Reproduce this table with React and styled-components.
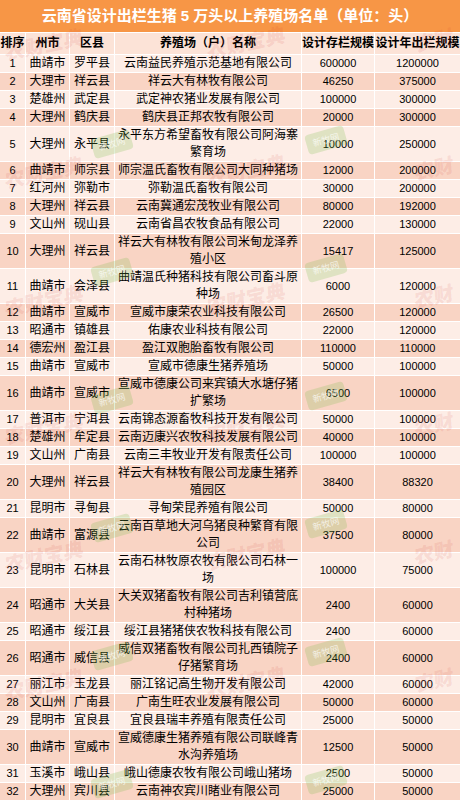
import React from 'react';
import styled, {createGlobalStyle} from 'styled-components';

const GlobalStyle = createGlobalStyle`
  html, body {
    margin: 0;
    padding: 0;
    background: #fff;
  }
  body {
    font-family: "Liberation Sans", "Noto Sans CJK SC", sans-serif;
    color: #000;
  }
`;

const Sheet = styled.div`
  position: relative;
  width: 460px;
  display: flex;
  flex-direction: column;
  gap: 1px;
  background: #fff;
  overflow: hidden;
`;

const Title = styled.div`
  height: 32px;
  background: #f79646;
  color: #fff;
  font-weight: bold;
  font-size: 15px;
  line-height: 32px;
  text-align: center;
  white-space: nowrap;
`;

const Row = styled.div`
  display: grid;
  grid-template-columns: 25px 43px 44px 186px 72px 85px;
  column-gap: 1px;
  & > * {
    background: ${p => p.$head ? '#fce3d7' : p.$even ? '#f9d4c4' : '#fdede6'};
  }
`;

const Cell = styled.div`
  display: flex;
  align-items: center;
  justify-content: center;
  text-align: center;
  font-size: 12px;
  line-height: 17px;
`;

const HeadCell = styled(Cell)`
  height: 21px;
  font-weight: bold;
  white-space: nowrap;
`;

const NameCell = styled(Cell)`
  padding: 0 2px;
`;

const NumCell = styled(Cell)`
  font-size: 11px;
`;

const Marks = styled.div`
  position: absolute;
  inset: 0;
  pointer-events: none;
`;

const Stamp = styled.span`
  position: absolute;
  left: ${p => p.$x}px;
  top: ${p => p.$y}px;
  font-family: "Noto Sans CJK SC", sans-serif;
  font-weight: 900;
  font-size: 20px;
  line-height: 1;
  color: rgba(205, 45, 45, 0.11);
  transform: rotate(-12deg) skewX(-8deg);
  white-space: nowrap;
`;

const Badge = styled.span`
  position: absolute;
  left: ${p => p.$x}px;
  top: ${p => p.$y}px;
  width: 40px;
  height: 20px;
  border-radius: 4px;
  background: rgba(120, 185, 70, 0.22);
  color: rgba(255, 255, 255, 0.7);
  font-family: "Noto Sans CJK SC", sans-serif;
  font-size: 9px;
  line-height: 20px;
  text-align: center;
  transform: rotate(-16deg);
`;

const farms = [
  [1, '曲靖市', '罗平县', '云南益民养殖示范基地有限公司', 600000, 1200000],
  [2, '大理市', '祥云县', '祥云大有林牧有限公司', 46250, 375000],
  [3, '楚雄州', '武定县', '武定神农猪业发展有限公司', 100000, 300000],
  [4, '大理州', '鹤庆县', '鹤庆县正邦农牧有限公司', 20000, 300000],
  [5, '大理州', '永平县', '永平东方希望畜牧有限公司阿海寨繁育场', 10000, 250000],
  [6, '曲靖市', '师宗县', '师宗温氏畜牧有限公司大同种猪场', 12000, 200000],
  [7, '红河州', '弥勒市', '弥勒温氏畜牧有限公司', 30000, 200000],
  [8, '大理州', '祥云县', '云南冀通宏茂牧业有限公司', 80000, 192000],
  [9, '文山州', '砚山县', '云南省昌农牧食品有限公司', 22000, 130000],
  [10, '大理州', '祥云县', '祥云大有林牧有限公司米甸龙泽养殖小区', 15417, 125000],
  [11, '曲靖市', '会泽县', '曲靖温氏种猪科技有限公司畜斗原种场', 6000, 120000],
  [12, '曲靖市', '宣威市', '宣威市康荣农业科技有限公司', 26500, 120000],
  [13, '昭通市', '镇雄县', '佑康农业科技有限公司', 22000, 120000],
  [14, '德宏州', '盈江县', '盈江双胞胎畜牧有限公司', 110000, 110000],
  [15, '曲靖市', '宣威市', '宣威市德康生猪养殖场', 50000, 100000],
  [16, '曲靖市', '宣威市', '宣威市德康公司来宾镇大水塘仔猪扩繁场', 6500, 100000],
  [17, '普洱市', '宁洱县', '云南锦态源畜牧科技开发有限公司', 50000, 100000],
  [18, '楚雄州', '牟定县', '云南迈康兴农牧科技发展有限公司', 40000, 100000],
  [19, '文山州', '广南县', '云南三丰牧业开发有限责任公司', 100000, 100000],
  [20, '大理州', '祥云县', '祥云大有林牧有限公司龙康生猪养殖园区', 38400, 88320],
  [21, '昆明市', '寻甸县', '寻甸荣昆养殖有限公司', 50000, 80000],
  [22, '曲靖市', '富源县', '云南百草地大河乌猪良种繁育有限公司', 37500, 80000],
  [23, '昆明市', '石林县', '云南石林牧原农牧有限公司石林一场', 100000, 75000],
  [24, '昭通市', '大关县', '大关双猪畜牧有限公司吉利镇营底村种猪场', 2400, 60000],
  [25, '昭通市', '绥江县', '绥江县猪猪侠农牧科技有限公司', 2400, 60000],
  [26, '昭通市', '威信县', '威信双猪畜牧有限公司扎西镇院子仔猪繁育场', 2400, 60000],
  [27, '丽江市', '玉龙县', '丽江铭记高生物开发有限公司', 42000, 60000],
  [28, '文山州', '广南县', '广南生旺农业发展有限公司', 50000, 60000],
  [29, '昆明市', '宜良县', '宜良县瑞丰养殖有限责任公司', 25000, 50000],
  [30, '曲靖市', '宣威市', '宣威德康生猪养殖有限公司联峰青水沟养殖场', 12500, 50000],
  [31, '玉溪市', '峨山县', '峨山德康农牧有限公司峨山猪场', 2500, 50000],
  [32, '大理州', '宾川县', '云南神农宾川睹业有限公司', 25000, 50000],
];

// watermark bands repeat roughly every 128px down the sheet
const bands = [0, 1, 2, 3, 4, 5];

export default function App() {
  return (
    <>
      <GlobalStyle/>
      <Sheet>
        <Title>云南省设计出栏生猪 5 万头以上养殖场名单（单位：头）</Title>
        <Row $head>
          <HeadCell>排序</HeadCell>
          <HeadCell>州市</HeadCell>
          <HeadCell>区县</HeadCell>
          <HeadCell>养殖场（户）名称</HeadCell>
          <HeadCell>设计存栏规模</HeadCell>
          <HeadCell>设计年出栏规模</HeadCell>
        </Row>
        {farms.map(([rank, city, county, name, stock, yearly]) => (
          <Row key={rank} $even={rank % 2 === 0}>
            <NumCell>{rank}</NumCell>
            <Cell>{city}</Cell>
            <Cell>{county}</Cell>
            <NameCell>{name}</NameCell>
            <NumCell>{stock}</NumCell>
            <NumCell>{yearly}</NumCell>
          </Row>
        ))}
        <Marks>
          {bands.map(i => (
            <React.Fragment key={i}>
              <Stamp $x={4} $y={34 + i * 128}>农财宝典</Stamp>
              <Stamp $x={206} $y={32 + i * 128}>农财宝典</Stamp>
              <Stamp $x={414} $y={30 + i * 128}>农财</Stamp>
              <Badge $x={92} $y={134 + i * 128}>新牧网</Badge>
              <Badge $x={306} $y={130 + i * 128}>新牧网</Badge>
            </React.Fragment>
          ))}
        </Marks>
      </Sheet>
    </>
  );
}
